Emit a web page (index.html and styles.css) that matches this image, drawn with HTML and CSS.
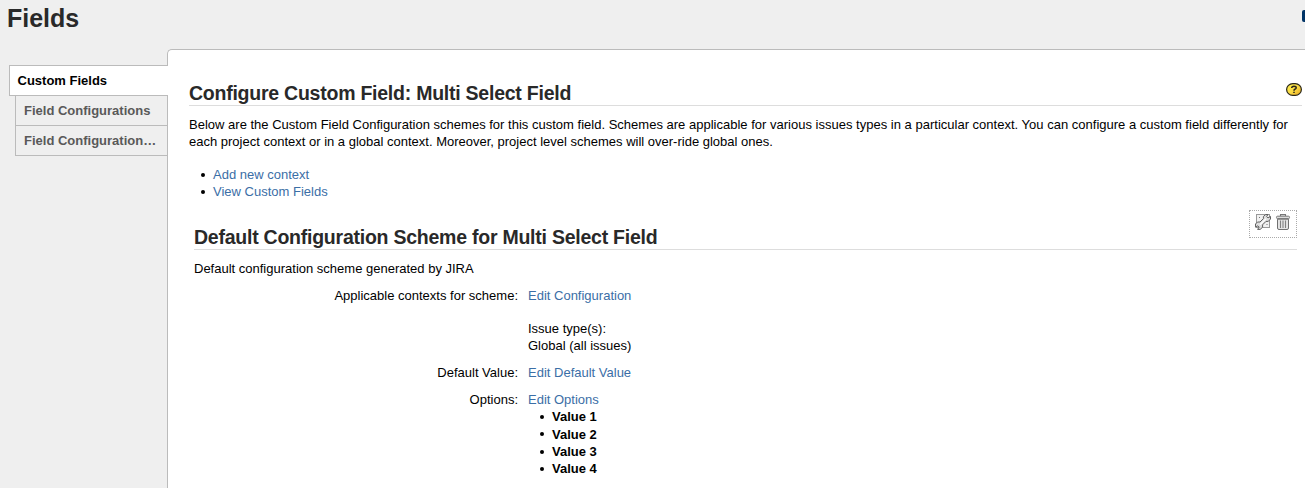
FILE: index.html
```html
<!DOCTYPE html>
<html lang="en">
<head>
<meta charset="utf-8">
<title>Fields</title>
<link rel="stylesheet" href="styles.css">
</head>
<body>
<header class="page-header">
  <h1>Fields</h1>
  <span class="header-button"></span>
</header>
<div class="layout">
  <nav class="tabs">
    <a class="tab active">Custom Fields</a>
    <a class="tab">Field Configurations</a>
    <a class="tab">Field Configuration…</a>
  </nav>
  <main class="panel">
    <div class="section-head">
      <h2>Configure Custom Field: Multi Select Field</h2>
      <svg class="help" width="16" height="13" viewBox="0 0 16 13">
        <defs><linearGradient id="gold" x1="0" y1="0" x2="1" y2="1"><stop offset="0" stop-color="#fff04e"/><stop offset=".5" stop-color="#fbdc45"/><stop offset="1" stop-color="#e8a51c"/></linearGradient></defs>
        <rect x=".6" y=".6" width="14.8" height="11.8" rx="6.2" ry="5.9" fill="url(#gold)" stroke="#29261b" stroke-width="1.2"/>
        <path d="M5.8 4.9V4.3Q6 3.2 7.9 3.2Q10.2 3.2 10.2 4.7Q10.2 5.7 8.9 6.2Q8 6.6 8 7.7M8 8.8V10" fill="none" stroke="#29261b" stroke-width="1.5"/>
      </svg>
    </div>
    <p class="intro"><span class="line-a">Below are the Custom Field Configuration schemes for this custom field. Schemes are applicable for various issues types in a particular context. You can configure a custom field differently for</span><br><span class="line-b">each project context or in a global context. Moreover, project level schemes will over-ride global ones.</span></p>
    <ul class="links">
      <li><a>Add new context</a></li>
      <li><a>View Custom Fields</a></li>
    </ul>
    <section class="scheme">
      <div class="section-head scheme-head">
        <h2>Default Configuration Scheme for Multi Select Field</h2>
        <div class="tools">
          <svg width="16" height="16" viewBox="0 0 16 16">
            <rect x="1.5" y=".5" width="13" height="13" fill="#f1f1f1" stroke="#999"/>
            <path d="M4 3.5h1M11.5 10.5h1" stroke="#777"/>
            <path d="M.5 10L2.5 8H5L8.4 4.6V2.5L10.7.5H13L11.6 2.5L13 3.9L15.5 2.4V5L13.3 7.4H11L7.6 10.8V13.2L5.2 15.4H2.6L4.2 13.1L2.9 11.8L.6 13.2Z" fill="#dedede" stroke="#606060"/>
            <path d="M5 10.8L11 4.8" stroke="#fff" stroke-width="1.3"/>
          </svg>
          <svg width="16" height="16" viewBox="0 0 16 16">
            <path d="M5.5 2V.6h5V2" fill="none" stroke="#777" stroke-width="1.1"/>
            <rect x="1.5" y="2.2" width="13" height="2.4" rx="1" fill="#ddd" stroke="#777"/>
            <path d="M2.5 5.2H13.5V14Q13.5 15.5 12 15.5H4Q2.5 15.5 2.5 14Z" fill="#e4e4e4" stroke="#707070"/>
            <path d="M5.5 6.5V14M8 6.5V14M10.5 6.5V14" stroke="#808080" stroke-width="1.1"/>
          </svg>
        </div>
      </div>
      <p class="description">Default configuration scheme generated by JIRA</p>
      <dl class="settings">
        <dt>Applicable contexts for scheme:</dt>
        <dd><a>Edit Configuration</a><div class="contexts">Issue type(s):<br>Global (all issues)</div></dd>
        <dt>Default Value:</dt>
        <dd><a>Edit Default Value</a></dd>
        <dt>Options:</dt>
        <dd><a>Edit Options</a>
          <ul class="options"><li>Value 1</li><li>Value 2</li><li>Value 3</li><li>Value 4</li></ul>
        </dd>
      </dl>
    </section>
  </main>
</div>
</body>
</html>
```
FILE: styles.css
```css
* { box-sizing: border-box; }
body { margin: 0; height: 488px; overflow: hidden; background: #efefef; color: #000; font: 13px/17px "Liberation Sans", Arial, sans-serif; }
h1, h2, p, ul, dl, dd { margin: 0; padding: 0; }
a { color: #3b6ea6; }
.page-header { height: 49px; padding: 4px 0 0 7px; display: flex; justify-content: space-between; }
h1 { font-size: 25px; line-height: 29px; color: #292929; }
.header-button { width: 3px; height: 12px; margin-top: 6px; background: #003366; border-radius: 2px 0 0 2px; }
.layout { display: flex; height: 439px; }
.tabs { width: 168px; flex: none; padding: 16px 0 0 9px; position: relative; z-index: 1; }
.tab { display: block; height: 30px; margin-left: 6px; margin-right: 1px; padding: 0 0 0 8px; border: solid #bbb; border-width: 0 0 1px 1px; line-height: 29px; font-weight: bold; color: #595959; white-space: nowrap; }
.tab.active { height: 31px; margin: 0; border-top-width: 1px; padding-left: 7.5px; background: #fff; color: #000; }
.panel { flex: 1; margin-left: -1px; padding: 31px 3px 0 21px; background: #fff; border: solid #bbb; border-width: 1px 0 0 1px; border-top-left-radius: 5px; }
.section-head { display: flex; justify-content: space-between; height: 25px; border-bottom: 1px solid #ddd; }
h2 { font-size: 19.5px; letter-spacing: -0.24px; line-height: 24px; color: #292929; white-space: nowrap; }
.help { margin: 2px 0 0; }
.intro { margin-top: 10px; white-space: nowrap; }
.line-a { letter-spacing: 0.008px; }
.links { list-style: none; margin: 16px 0 0 12px; }
.links li, .options li { display: flex; align-items: center; }
.links li::before, .options li::before { content: ""; width: 4px; height: 4px; border-radius: 50%; background: #000; margin: 0 8px 0 0; }
.scheme { padding: 10px 5px 0; }
.scheme-head { height: 40px; align-items: flex-end; }
.scheme-head h2 { line-height: 23px; }
.tools { display: flex; align-self: flex-start; gap: 4px; width: 48px; height: 28px; padding: 3px 5px; border: 1px dotted #aaa; }
.description { margin-top: 10px; }
.settings { display: grid; grid-template-columns: 324px 1fr; column-gap: 10px; row-gap: 10px; margin-top: 10px; }
dt { text-align: right; }
.contexts { margin-top: 16px; }
.options { list-style: none; padding-left: 12px; font-weight: bold; }
.options li:nth-child(2) { height: 18px; }
```
